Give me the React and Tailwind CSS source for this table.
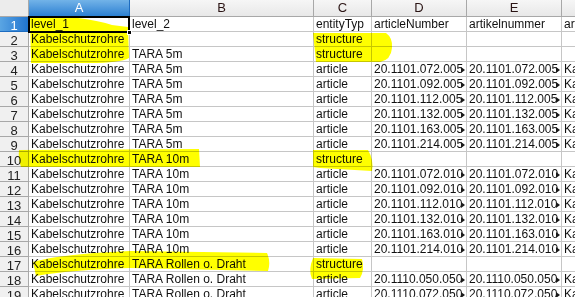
import React from "react";

const COLS = ["A", "B", "C", "D", "E", ""];

const art = (b, c, n) => [b, c, "article", n, n, "Kabelschutzrohr TARA"];

const ROWS = [
  ["level_1", "level_2", "entityTyp", "articleNumber", "artikelnummer", "artikelbezeichnung"],
  ["Kabelschutzrohre", "", "structure", "", "", ""],
  ["Kabelschutzrohre", "TARA 5m", "structure", "", "", ""],
  art("Kabelschutzrohre", "TARA 5m", "20.1101.072.005"),
  art("Kabelschutzrohre", "TARA 5m", "20.1101.092.005"),
  art("Kabelschutzrohre", "TARA 5m", "20.1101.112.005"),
  art("Kabelschutzrohre", "TARA 5m", "20.1101.132.005"),
  art("Kabelschutzrohre", "TARA 5m", "20.1101.163.005"),
  art("Kabelschutzrohre", "TARA 5m", "20.1101.214.005"),
  ["Kabelschutzrohre", "TARA 10m", "structure", "", "", ""],
  art("Kabelschutzrohre", "TARA 10m", "20.1101.072.010"),
  art("Kabelschutzrohre", "TARA 10m", "20.1101.092.010"),
  art("Kabelschutzrohre", "TARA 10m", "20.1101.112.010"),
  art("Kabelschutzrohre", "TARA 10m", "20.1101.132.010"),
  art("Kabelschutzrohre", "TARA 10m", "20.1101.163.010"),
  art("Kabelschutzrohre", "TARA 10m", "20.1101.214.010"),
  ["Kabelschutzrohre", "TARA Rollen o. Draht", "structure", "", "", ""],
  art("Kabelschutzrohre", "TARA Rollen o. Draht", "20.1110.050.050"),
  art("Kabelschutzrohre", "TARA Rollen o. Draht", "20.1110.072.050"),
];

const Cell = ({ text, clipped }) => (
  <div className="relative h-[15px] border-r border-b border-[#c6c6c6] bg-white overflow-hidden">
    <div className={`pl-[2px] leading-[15px] whitespace-nowrap overflow-hidden ${clipped ? "pr-[5px]" : ""}`}>
      {text}
    </div>
    {clipped && (
      <span className="absolute right-[1px] top-[5px] w-0 h-0 border-y-[3px] border-y-transparent border-l-[4px] border-l-[#1a1a1a]" />
    )}
  </div>
);

const Highlights = () => (
  <svg
    className="absolute inset-0 pointer-events-none mix-blend-multiply"
    width="575"
    height="297"
    viewBox="0 0 575 297"
  >
    <g fill="#ffff00">
      <path d="M30,18 L78,18 Q100,21 112,25 L128,27 L129,58 Q120,63 90,63 L31,63 Z" />
      <path d="M313,33 L386,33 Q393,38 392,48 Q391,60 380,62 L316,62 Z" />
      <path d="M19,150 L199,149 L200,167 L21,167 Q18,158 19,150 Z" />
      <path d="M313,150 L368,150 Q374,160 372,171 L320,168 L313,167 Z" />
      <path d="M33,262 Q60,254 130,251 L267,253 Q271,262 268,271 L130,268 Q70,270 36,276 Z" />
      <path d="M313,258 L362,259 Q365,270 360,278 L312,279 Q308,270 313,258 Z" />
    </g>
  </svg>
);

export default function App() {
  return (
    <div
      className="relative w-[575px] h-[297px] overflow-hidden bg-white text-[12px] text-[#111]"
      style={{ fontFamily: '"Liberation Sans", Arial, sans-serif' }}
    >
      <div className="grid grid-cols-[29px_101px_184px_58px_95px_95px_60px]">
        {/* header row */}
        <div className="h-[17px] border-r border-b border-[#a8a8a8] bg-[#ececec]" />
        {COLS.map((c, i) => (
          <div
            key={i}
            className={`h-[17px] border-r border-b flex items-center justify-center text-[13px] ${
              i === 0
                ? "bg-gradient-to-b from-[#72b3e8] to-[#2a80d2] text-white border-[#1d6cc0]"
                : "bg-gradient-to-b from-[#f6f6f6] to-[#e8e8e8] text-[#2a1414] border-[#a8a8a8]"
            }`}
          >
            {c}
          </div>
        ))}

        {ROWS.map((row, r) => (
          <React.Fragment key={r}>
            <div
              className={`h-[15px] border-r border-b flex items-center justify-center text-[13px] leading-none pt-[2px] ${
                r === 0
                  ? "bg-gradient-to-r from-[#5aa5e3] to-[#1f74cf] text-white border-[#1d6cc0]"
                  : "bg-[#f0f0f0] text-[#222] border-[#a8a8a8]"
              }`}
            >
              {r + 1}
            </div>
            {row.map((t, c) => (
              <Cell key={c} text={t} clipped={(c === 3 || c === 4) && t.startsWith("20.")} />
            ))}
          </React.Fragment>
        ))}
      </div>

      <Highlights />

      {/* cell cursor on A1 */}
      <div className="absolute left-[28px] top-[16px] w-[102px] h-[17px] border-2 border-black pointer-events-none" />
      <div className="absolute left-[127px] top-[30px] w-[5px] h-[5px] bg-black border border-white" />
    </div>
  );
}
